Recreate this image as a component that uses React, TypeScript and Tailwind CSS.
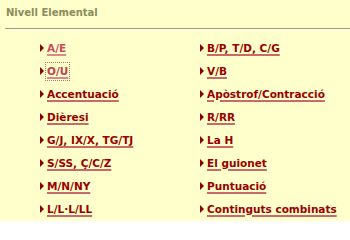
const left = [
  "A/E",
  "O/U",
  "Accentuació",
  "Dièresi",
  "G/J, IX/X, TG/TJ",
  "S/SS, Ç/C/Z",
  "M/N/NY",
  "L/L·L/LL",
];

const right = [
  "B/P, T/D, C/G",
  "V/B",
  "Apòstrof/Contracció",
  "R/RR",
  "La H",
  "El guionet",
  "Puntuació",
  "Continguts combinats",
];

const Arrow = () => (
  <svg width="4" height="8" viewBox="0 0 4 8" className="shrink-0 -mt-[1px]">
    <path d="M0 0 L4 4 L0 8 Z" fill="#8b0000" />
  </svg>
);

const Item = ({ label, state }: { label: string; state?: "hover" | "focus" }) => {
  let cls =
    "text-[#990000] underline decoration-[#c86a6a] decoration-2 underline-offset-2";
  if (state === "hover") {
    cls = "text-[#cc4a5a] underline decoration-[#d98890] decoration-2 underline-offset-2";
  }
  if (state === "focus") {
    cls =
      "text-[#c0404f] underline decoration-[#d98890] decoration-2 underline-offset-2 outline-1 outline-dotted outline-[#c07070] outline-offset-1";
  }
  return (
    <div className="flex items-center gap-[3px]">
      <Arrow />
      <a href="#" className={cls}>
        {label}
      </a>
    </div>
  );
};

export default function App() {
  return (
    <div
      className="w-[350px] h-[221px] bg-[#ffffcc] overflow-hidden"
      style={{ fontFamily: '"DejaVu Sans", Verdana, sans-serif' }}
    >
      <div className="pl-[6px] pt-[5px] h-[28px] text-[10px] font-bold text-[#8c8c5c]">
        Nivell Elemental
      </div>
      <div className="ml-[5px] h-[1px] bg-[#9a9a9a]" />
      <div className="grid grid-cols-[160px_150px] auto-rows-[23px] pl-[40px] pt-[8px] text-[10.5px] font-bold">
        {left.map((l, i) => (
          <div key={i} className="contents">
            <Item
              label={l}
              state={i === 0 ? "hover" : i === 1 ? "focus" : undefined}
            />
            <Item label={right[i]} />
          </div>
        ))}
      </div>
    </div>
  );
}
